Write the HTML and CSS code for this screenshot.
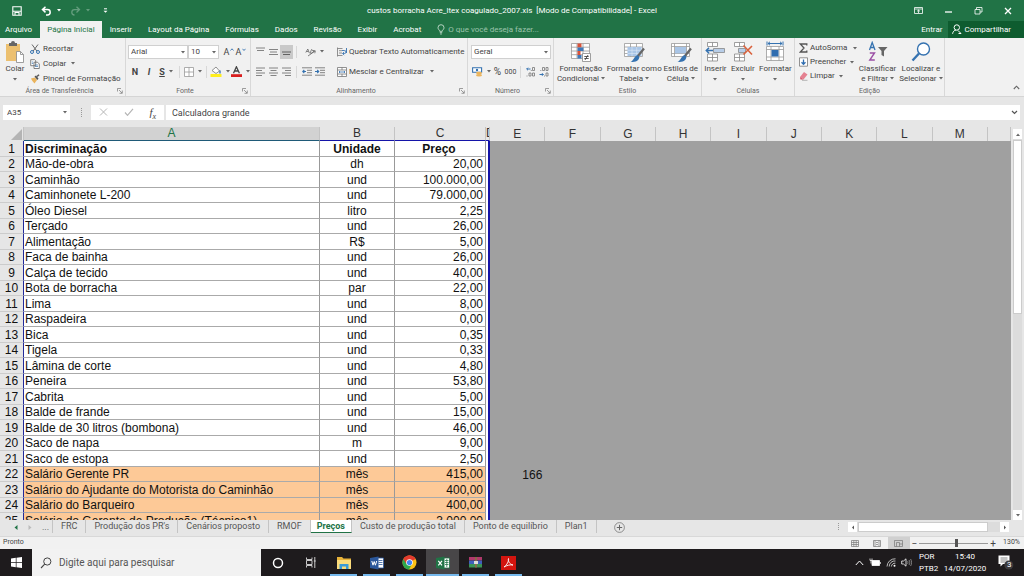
FILE: index.html
```html
<!DOCTYPE html>
<html lang="pt-BR">
<head>
<meta charset="utf-8">
<title>custos borracha Acre_ltex coagulado_2007.xls - Excel</title>
<link rel="stylesheet" href="styles.css">
</head>
<body>
<svg class="defs" aria-hidden="true">
  <symbol id="caret" viewBox="0 0 4 3"><path d="M0 0h4L2 2.4z" fill="currentColor"/></symbol>
  <symbol id="launch" viewBox="0 0 6 6"><path d="M.5 3.500V.5H4M2 2l3 3M5.300 2.500v2.800H2.500" fill="none" stroke="#777" stroke-width=".7"/></symbol>
</svg>

<header class="titlebar">
  <div class="quick">
    <button class="q-save" aria-label="Salvar"><svg width="10" height="10" viewBox="0 0 10 10"><path d="M.8.8h8.400v8.400H.8zM.8 5.200h8.400M3 9V6.500h4V9" fill="none" stroke="#fff" stroke-width="1.100"/></svg></button>
    <button class="q-undo" aria-label="Desfazer"><svg width="11" height="10" viewBox="0 0 11 10"><path d="M4.500.8L1.500 3.600l3 2.800M1.500 3.600h5a2.700 2.700 0 0 1 0 5.400H5" fill="none" stroke="#fff" stroke-width="1.500"/></svg><svg class="caret"><use href="#caret"/></svg></button>
    <button class="q-redo" aria-label="Refazer"><svg width="11" height="10" viewBox="0 0 11 10"><path d="M6.500.8l3 2.800-3 2.800M9.500 3.600h-5a2.700 2.700 0 0 0 0 5.400" fill="none" stroke="#fff" stroke-width="1.300"/></svg><svg class="caret"><use href="#caret"/></svg></button>
    <button class="q-more" aria-label="Personalizar"><svg width="5" height="6" viewBox="0 0 5 6"><path d="M1 .8h3" stroke="#fff"/><path d="M.5 2.700h4l-2 2z" fill="#fff"/></svg></button>
  </div>
  <h1>custos borracha Acre_ltex coagulado_2007.xls &nbsp;[Modo de Compatibilidade] - Excel</h1>
  <div class="window-buttons">
    <button aria-label="Opções da faixa"><svg width="9" height="7" viewBox="0 0 9 7"><path d="M.5.5h8v6h-8zM.5 2h8M4.500 6V3M3 4.400L4.500 3 6 4.400" fill="none" stroke="#fff" stroke-width=".8"/></svg></button>
    <button aria-label="Minimizar"><svg width="9" height="7" viewBox="0 0 9 7"><path d="M1 5h7" stroke="#fff" stroke-width="1.300"/></svg></button>
    <button aria-label="Restaurar"><svg width="9" height="8" viewBox="0 0 9 8"><path d="M1 2.500h5v4.500H1zM2.500 2.500v-2H8v4.500H6" fill="none" stroke="#fff" stroke-width=".8"/></svg></button>
    <button aria-label="Fechar"><svg width="8" height="8" viewBox="0 0 8 8"><path d="M1 1l6 6M7 1L1 7" stroke="#fff" stroke-width="1.300"/></svg></button>
  </div>
</header>

<nav class="tabs">
  <a href="#" class="file">Arquivo</a>
  <a href="#" class="active">Página Inicial</a>
  <a href="#">Inserir</a>
  <a href="#">Layout da Página</a>
  <a href="#">Fórmulas</a>
  <a href="#">Dados</a>
  <a href="#">Revisão</a>
  <a href="#">Exibir</a>
  <a href="#">Acrobat</a>
  <a href="#" class="tell"><svg width="8" height="11" viewBox="0 0 8 11"><path d="M2.700 7.300C2.700 6 1 5.500 1 3.700a3 3 0 0 1 6 0C7 5.500 5.300 6 5.300 7.300zM2.800 8.700h2.400M3.200 10h1.600" fill="none" stroke="#c4ddce" stroke-width=".9"/></svg>O que você deseja fazer...</a>
  <div class="account">
    <a href="#">Entrar</a>
    <button class="share"><svg width="10" height="11" viewBox="0 0 10 11"><circle cx="4.800" cy="3.500" r="2.700" fill="none" stroke="#fff"/><path d="M.6 9.800c.2-2 1.600-3.600 3.200-3.600M6 6.500l3 3M6.500 9.500H9" fill="none" stroke="#fff"/></svg>Compartilhar</button>
  </div>
</nav>

<section class="ribbon" aria-label="Página Inicial">
  <div class="group g-clip">
    <div class="body">
      <button class="big">
        <svg width="20" height="22" viewBox="0 0 20 22"><path d="M1 3h14v17H1z" fill="#ecc070"/><path d="M4 2h2a2 2 0 0 1 4 0h2v3H4z" fill="#666"/><path d="M11.500 10.500h4l3 3v8h-7z" fill="#fff" stroke="#888" stroke-width=".8"/><path d="M15.500 10.500v3h3" fill="none" stroke="#888" stroke-width=".8"/></svg>
        <span>Colar</span><svg class="caret"><use href="#caret"/></svg>
      </button>
      <div class="list">
        <button><svg width="10" height="10" viewBox="0 0 10 10"><path d="M2 .5l4.800 6.500M8 .5L3.200 7" stroke="#666" fill="none"/><circle cx="2" cy="8" r="1.500" fill="none" stroke="#3572b0"/><circle cx="8" cy="8" r="1.500" fill="none" stroke="#3572b0"/></svg>Recortar</button>
        <button><svg width="10" height="10" viewBox="0 0 10 10"><path d="M.7.7h4l1 1v5h-5zM4 3.200h3.500L9.300 5v4.500H4z" fill="#fff" stroke="#666" stroke-width=".8"/><path d="M5 6h3M5 7.500h3M1.800 3h1.500M1.800 4.500h1.500" stroke="#3572b0" stroke-width=".7"/></svg>Copiar<svg class="caret"><use href="#caret"/></svg></button>
        <button><svg width="10" height="10" viewBox="0 0 10 10"><path d="M1 4.500l4-1 2 2.500-2.500 3.500C3 8 2 6.500 1 4.500z" fill="#eab45d"/><path d="M4.500 2.500l1.500-1 2.500 3-1.200 1.500z" fill="#555"/><path d="M7 2.500L9 .7" stroke="#555" stroke-width="1.500"/></svg>Pincel de Formatação</button>
      </div>
    </div>
    <footer><span>Área de Transferência</span><svg class="launch"><use href="#launch"/></svg></footer>
  </div>

  <div class="group g-font">
    <div class="body rows">
      <div class="row">
        <span class="drop"><select class="font-name" aria-label="Fonte"><option>Arial</option></select><svg class="caret"><use href="#caret"/></svg></span>
        <span class="drop"><select class="font-size" aria-label="Tamanho"><option>10</option></select><svg class="caret"><use href="#caret"/></svg></span>
        <button class="grow" aria-label="Aumentar fonte">A<svg width="4" height="7" viewBox="0 0 4 7"><path d="M.5 2.500L2 .8l1.500 1.700" fill="none" stroke="#3572b0" stroke-width=".9"/></svg></button>
        <button class="grow" aria-label="Diminuir fonte">A<svg width="4" height="7" viewBox="0 0 4 7"><path d="M.5.8L2 2.500 3.500.8" fill="none" stroke="#3572b0" stroke-width=".9"/></svg></button>
      </div>
      <div class="row">
        <button class="t14"><b>N</b></button>
        <button class="t14"><b><i>I</i></b></button>
        <button class="t20"><b><u>S</u></b><svg class="caret"><use href="#caret"/></svg></button>
        <i class="sep"></i>
        <button class="t20"><svg width="10" height="10" viewBox="0 0 10 10"><path d="M.5.5h9v9h-9zM5 .5v9M.5 5h9" fill="#fff" stroke="#999" stroke-width=".8"/></svg><svg class="caret"><use href="#caret"/></svg></button>
        <i class="sep"></i>
        <button class="t20"><svg width="12" height="11" viewBox="0 0 12 11"><path d="M2 4.500l4-3.500 3.500 4L6 7.500z" fill="#fff" stroke="#777" stroke-width=".8"/><path d="M10 4.500v3" stroke="#3572b0" stroke-width="1.300"/><path d="M.5 8h11v3H.5z" fill="#ffee1f"/></svg><svg class="caret"><use href="#caret"/></svg></button>
        <button class="t20"><svg width="11" height="11" viewBox="0 0 11 11"><path d="M2.500 7.200L5.400.8l3 6.400M3.500 5h4" fill="none" stroke="#444" stroke-width="1.300"/><path d="M0 8.200h11V11H0z" fill="#d81e1e"/></svg><svg class="caret"><use href="#caret"/></svg></button>
      </div>
    </div>
    <footer><span>Fonte</span><svg class="launch"><use href="#launch"/></svg></footer>
  </div>

  <div class="group g-align">
    <div class="body rows">
      <div class="row">
        <button class="t14"><svg width="9" height="9" viewBox="0 0 9 9"><path d="M0 1h9M1 3.500h7" stroke="#777" stroke-width=".9"/></svg></button>
        <button class="t14"><svg width="9" height="9" viewBox="0 0 9 9"><path d="M0 2.500h9M1 5h7M0 7.500h9" stroke="#777" stroke-width=".9"/></svg></button>
        <button class="t14 on"><svg width="9" height="9" viewBox="0 0 9 9"><path d="M0 5h9M1 7.500h7" stroke="#555" stroke-width=".9"/></svg></button>
        <i class="sep"></i>
        <button class="orient"><svg width="11" height="10" viewBox="0 0 11 10"><path d="M.8 5.500l2-3.500 1.500 4M1.500 4.500h2M5 6.500l1.500-4 2.500 2-3.500 2.200M3 9l7-5M7.800 3.500l2.500.3-.5 2.500" fill="none" stroke="#666" stroke-width=".8"/></svg><svg class="caret"><use href="#caret"/></svg></button>
        <button class="wide"><svg width="10" height="10" viewBox="0 0 10 10"><path d="M.5.500V9.500M.5 1.500h5M2 3.700h3M2 6h3M.5 8.500h5" fill="none" stroke="#777" stroke-width=".8"/><path d="M5 3.500h2.500a1.300 1.300 0 0 1 0 3H6M7.200 5L5.500 6.500 7.200 8M9.500 1v5" fill="none" stroke="#3572b0" stroke-width=".9"/></svg>Quebrar Texto Automaticamente</button>
      </div>
      <div class="row">
        <button class="t14"><svg width="9" height="9" viewBox="0 0 9 9"><path d="M0 1h9M0 3.500h6M0 6h9M0 8.500h6" stroke="#777" stroke-width=".9"/></svg></button>
        <button class="t14"><svg width="9" height="9" viewBox="0 0 9 9"><path d="M0 1h9M1.500 3.500h6M0 6h9M1.500 8.500h6" stroke="#777" stroke-width=".9"/></svg></button>
        <button class="t14"><svg width="9" height="9" viewBox="0 0 9 9"><path d="M0 1h9M3 3.500h6M0 6h9M3 8.500h6" stroke="#777" stroke-width=".9"/></svg></button>
        <i class="sep"></i>
        <div class="indents">
          <button class="t14"><svg width="10" height="9" viewBox="0 0 10 9"><path d="M0 .8h10M5 3.300h5M5 5.700h5M0 8.200h10" stroke="#777" stroke-width=".9"/><path d="M4 4.500H.8M2.300 3L.8 4.500 2.300 6" stroke="#3572b0" stroke-width="1.100" fill="none"/></svg></button>
          <button class="t14"><svg width="10" height="9" viewBox="0 0 10 9"><path d="M0 .8h10M5 3.300h5M5 5.700h5M0 8.200h10" stroke="#777" stroke-width=".9"/><path d="M0 4.500h3.500M2.200 3l1.500 1.500L2.200 6" stroke="#3572b0" stroke-width="1.100" fill="none"/></svg></button>
        </div>
        <button class="wide"><svg width="10" height="10" viewBox="0 0 10 10"><path d="M.5.5h9v9h-9zM.5 3h9M.5 7h9M5 .5V3M5 7v2.500" fill="#fff" stroke="#777" stroke-width=".8"/><path d="M2 5h6M3 4L2 5l1 1M7 4l1 1-1 1" fill="none" stroke="#3572b0" stroke-width=".8"/></svg>Mesclar e Centralizar<svg class="caret far"><use href="#caret"/></svg></button>
      </div>
    </div>
    <footer><span>Alinhamento</span><svg class="launch"><use href="#launch"/></svg></footer>
  </div>

  <div class="group g-num">
    <div class="body rows">
      <div class="row">
        <span class="drop fill"><select aria-label="Formato de número"><option>Geral</option></select><svg class="caret"><use href="#caret"/></svg></span>
      </div>
      <div class="row">
        <button class="t20"><svg width="11" height="10" viewBox="0 0 11 10"><path d="M.6.8h9v4.400h-9z" fill="#fff" stroke="#3572b0" stroke-width="1.100"/><circle cx="5" cy="3" r="1.200" fill="#3572b0"/><ellipse cx="7" cy="6" rx="3" ry="1.200" fill="#eab45d"/><ellipse cx="7" cy="8.300" rx="3" ry="1.200" fill="#eab45d"/></svg><svg class="caret"><use href="#caret"/></svg></button>
        <button class="t14 pct">%</button>
        <button class="t14 mil">000</button>
        <i class="sep"></i>
        <button class="t14"><svg width="10" height="10" viewBox="0 0 10 10"><path d="M4.500 2H.7M2 .7L.7 2 2 3.300" fill="none" stroke="#3572b0"/><path d="M6.500.5h2v3h-2zM3 6h2v3H3zM6.500 6h2v3h-2zM1 8.500v1M5.300 3v1" fill="none" stroke="#777" stroke-width=".8"/></svg></button>
        <button class="t14"><svg width="10" height="10" viewBox="0 0 10 10"><path d="M.5 7.500h3.800M3 6.200l1.300 1.300L3 8.800" fill="none" stroke="#3572b0"/><path d="M3.500.5h2v3h-2zM7 .5h2v3H7zM7 6h2v3H7zM1.800 3v1M5.500 8.500v1" fill="none" stroke="#777" stroke-width=".8"/></svg></button>
      </div>
    </div>
    <footer><span>Número</span><svg class="launch"><use href="#launch"/></svg></footer>
  </div>

  <div class="group g-style">
    <div class="body">
      <button class="big"><svg width="22" height="22" viewBox="0 0 22 22"><path d="M1.500 2.500h18v15h-18zM1.500 6.200h18M1.500 10h18M1.500 13.700h18M7 2.500v15M13 2.500v15" fill="#fff" stroke="#999" stroke-width=".8"/><path d="M7.500 2.500h4v4h-4z" fill="#d9533a"/><path d="M7.500 6.500h6v3.500h-6z" fill="#3f78b8"/><path d="M7.500 10h3v4h-3z" fill="#d9533a"/><path d="M7.500 14h4v3.500h-4z" fill="#3f78b8"/><path d="M12.500 12.500h8v8h-8z" fill="#fff" stroke="#888" stroke-width=".8"/><path d="M14.300 15.500h4.400M14.300 17.500h4.400M18 14l-3 5" stroke="#333" stroke-width=".8"/></svg><span>Formatação<br>Condicional <svg class="caret"><use href="#caret"/></svg></span></button>
      <button class="big"><svg width="22" height="22" viewBox="0 0 22 22"><path d="M1.500 2.500h18v13h-18zM1.500 6h18M1.500 9.300h18M1.500 12.500h18M7.500 2.500v13M13.500 2.500v13" fill="#fff" stroke="#999" stroke-width=".8"/><path d="M4.500 6h14v9h-14z" fill="#a9c5e6"/><path d="M4.500 9.300h14M4.500 12.500h14M9 6v9M13.700 6v9" stroke="#dce8f5" stroke-width=".6"/><path d="M21 7.500l-6.500 8" stroke="#666" stroke-width="2.200"/><path d="M14.500 14l2 2c-1 4-3 5-9 5 3-1 3-5 7-7z" fill="#3572b0"/></svg><span>Formatar como<br>Tabela <svg class="caret"><use href="#caret"/></svg></span></button>
      <button class="big"><svg width="22" height="22" viewBox="0 0 22 22"><path d="M1.500 2.500h18v13h-18zM1.500 5.500h18M1.500 12.500h18M4.500 2.500v13M16.500 2.500v13" fill="#fff" stroke="#999" stroke-width=".8"/><path d="M5 6h11v6.300H5z" fill="#a9c5e6"/><path d="M21 7.500l-6.500 8" stroke="#666" stroke-width="2.200"/><path d="M14.500 14l2 2c-1 4-3 5-9 5 3-1 3-5 7-7z" fill="#3572b0"/></svg><span>Estilos de<br>Célula <svg class="caret"><use href="#caret"/></svg></span></button>
    </div>
    <footer><span>Estilo</span></footer>
  </div>

  <div class="group g-cells">
    <div class="body">
      <button class="big"><svg width="20" height="22" viewBox="0 0 20 22"><path d="M2.500 1.500h10v4h-10zM7.500 1.500v4M2.500 13h10v7h-10zM7.500 13v7M2.500 16.500h10" fill="#fff" stroke="#888" stroke-width=".8"/><path d="M8.500 7.500h11v4h-11z" fill="#b7cde8" stroke="#888" stroke-width=".8"/><path d="M8 9.500H1.500M4 6.800L1.300 9.500 4 12.200" fill="none" stroke="#3572b0" stroke-width="1.500"/></svg><span>Inserir</span><svg class="caret"><use href="#caret"/></svg></button>
      <button class="big"><svg width="20" height="22" viewBox="0 0 20 22"><path d="M1.500 1.500h10v4h-10zM6.500 1.500v4M1.500 13h10v7h-10zM6.500 13v7M1.500 16.500h10" fill="#fff" stroke="#888" stroke-width=".8"/><path d="M5.500 7.500h7v4h-7z" fill="#b7cde8" stroke="#888" stroke-width=".8"/><path d="M10.500 4.500l8.500 9M19 5l-8.500 8.500" stroke="#d9613c" stroke-width="1.600"/></svg><span>Excluir</span><svg class="caret"><use href="#caret"/></svg></button>
      <button class="big"><svg width="20" height="22" viewBox="0 0 20 22"><path d="M1.500 5.500h17v14h-17zM1.500 8.500h17M1.500 16h17M6 5.500v14M14 5.500v14" fill="#fff" stroke="#999" stroke-width=".8"/><path d="M6.500 9h7v6.500h-7z" fill="#2f6db0"/><path d="M3 2.500h14M5 .8L3 2.500l2 1.700M15 .8l2 1.700-2 1.700M2 .5v4M18 .5v4" fill="none" stroke="#3572b0"/></svg><span>Formatar</span><svg class="caret"><use href="#caret"/></svg></button>
    </div>
    <footer><span>Células</span></footer>
  </div>

  <div class="group g-edit">
    <div class="body">
      <div class="list">
        <button><svg width="9" height="10" viewBox="0 0 9 10"><path d="M7.800 2.500V1H1.300L5 5 1.300 9h6.500V7.500" fill="none" stroke="#555" stroke-width="1.300"/></svg>AutoSoma<svg class="caret far"><use href="#caret"/></svg></button>
        <button><svg width="9" height="10" viewBox="0 0 9 10"><path d="M.5.8h8v8.400h-8z" fill="#fff" stroke="#777" stroke-width=".8"/><path d="M4.500 2.500v5M2.500 5.300l2 2 2-2" fill="none" stroke="#2f6db0" stroke-width="1.300"/></svg>Preencher<svg class="caret"><use href="#caret"/></svg></button>
        <button><svg width="9" height="10" viewBox="0 0 9 10"><path d="M1 6l4-5 3.500 2.500-4 5z" fill="#e58191"/><path d="M1 6l3.500 2.500H1.500z" fill="#d04a60"/><path d="M3 9.300h5.500" stroke="#999" stroke-width=".7"/></svg>Limpar<svg class="caret"><use href="#caret"/></svg></button>
      </div>
      <button class="big"><svg width="20" height="22" viewBox="0 0 20 22"><path d="M1.500 9l2.700-7.500L7 9M2.500 6.500h3.500" fill="none" stroke="#3572b0" stroke-width="1.300"/><path d="M1.800 12h4.700l-4.700 7h5" fill="none" stroke="#9b4fa5" stroke-width="1.400"/><path d="M10 6h9.500l-3.500 4v5.500l-2.500-1.500V10z" fill="#666"/></svg><span>Classificar<br>e Filtrar <svg class="caret"><use href="#caret"/></svg></span></button>
      <button class="big"><svg width="20" height="22" viewBox="0 0 20 22"><circle cx="12.500" cy="8" r="6" fill="#fff" stroke="#3572b0" stroke-width="1.400"/><path d="M8 12.500l-6.500 7" stroke="#3572b0" stroke-width="2.400"/></svg><span>Localizar e<br>Selecionar <svg class="caret"><use href="#caret"/></svg></span></button>
    </div>
    <footer><span>Edição</span></footer>
  </div>
  <button class="collapse" aria-label="Recolher"><svg width="7" height="5" viewBox="0 0 7 5"><path d="M.8 4L3.500 1.200 6.200 4" fill="none" stroke="#666" stroke-width="1.100"/></svg></button>
</section>

<section class="formula">
  <span class="drop"><input class="name-box" aria-label="Caixa de nome" value="A35"><svg class="caret"><use href="#caret"/></svg></span>
  <i class="grip"></i>
  <div class="fx">
    <button aria-label="Cancelar"><svg width="9" height="8" viewBox="0 0 9 8"><path d="M1 .5l7 7M8 .5l-7 7" stroke="#b5b5b5"/></svg></button>
    <button aria-label="Inserir"><svg width="10" height="8" viewBox="0 0 10 8"><path d="M1 4.500l2.500 2.800L9 .8" fill="none" stroke="#b5b5b5" stroke-width="1.200"/></svg></button>
    <button class="fn" aria-label="Inserir função"><i>f<sub>x</sub></i></button>
  </div>
  <div class="entry">
    <input aria-label="Barra de fórmulas" value="Calculadora grande">
    <svg width="7" height="5" viewBox="0 0 7 5"><path d="M1 1l2.500 2.500L6 1" fill="none" stroke="#555" stroke-width="1.200"/></svg>
  </div>
</section>

<main class="sheet">
  <div class="grid">
    <table>
      <colgroup><col class="c-n"><col class="c-a"><col class="c-b"><col class="c-c"><col class="c-d"><col><col><col><col><col><col><col><col><col><col class="c-end"></colgroup>
      <thead><tr><th class="corner"><svg width="11" height="11" viewBox="0 0 11 11"><path d="M11 0v11H0z" fill="#b4b4b4"/></svg></th><th class="sel">A</th><th class="ink">B</th><th class="ink">C</th><th class="ink"><span class="narrow">D</span></th><th>E</th><th>F</th><th>G</th><th>H</th><th>I</th><th>J</th><th>K</th><th>L</th><th>M</th><th></th></tr></thead>
      <tbody>
        <tr class="head"><th>1</th><td>Discriminação</td><td>Unidade</td><td>Preço</td><td></td><td colspan="10"></td></tr>
        <tr><th>2</th><td>Mão-de-obra</td><td>dh</td><td>20,00</td><td></td><td colspan="10"></td></tr>
        <tr><th>3</th><td>Caminhão</td><td>und</td><td>100.000,00</td><td></td><td colspan="10"></td></tr>
        <tr><th>4</th><td>Caminhonete L-200</td><td>und</td><td>79.000,00</td><td></td><td colspan="10"></td></tr>
        <tr><th>5</th><td>Óleo Diesel</td><td>litro</td><td>2,25</td><td></td><td colspan="10"></td></tr>
        <tr><th>6</th><td>Terçado</td><td>und</td><td>26,00</td><td></td><td colspan="10"></td></tr>
        <tr><th>7</th><td>Alimentação</td><td>R$</td><td>5,00</td><td></td><td colspan="10"></td></tr>
        <tr><th>8</th><td>Faca de bainha</td><td>und</td><td>26,00</td><td></td><td colspan="10"></td></tr>
        <tr><th>9</th><td>Calça de tecido</td><td>und</td><td>40,00</td><td></td><td colspan="10"></td></tr>
        <tr><th>10</th><td>Bota de borracha</td><td>par</td><td>22,00</td><td></td><td colspan="10"></td></tr>
        <tr><th>11</th><td>Lima</td><td>und</td><td>8,00</td><td></td><td colspan="10"></td></tr>
        <tr><th>12</th><td>Raspadeira</td><td>und</td><td>0,00</td><td></td><td colspan="10"></td></tr>
        <tr><th>13</th><td>Bica</td><td>und</td><td>0,35</td><td></td><td colspan="10"></td></tr>
        <tr><th>14</th><td>Tigela</td><td>und</td><td>0,33</td><td></td><td colspan="10"></td></tr>
        <tr><th>15</th><td>Lâmina de corte</td><td>und</td><td>4,80</td><td></td><td colspan="10"></td></tr>
        <tr><th>16</th><td>Peneira</td><td>und</td><td>53,80</td><td></td><td colspan="10"></td></tr>
        <tr><th>17</th><td>Cabrita</td><td>und</td><td>5,00</td><td></td><td colspan="10"></td></tr>
        <tr><th>18</th><td>Balde de frande</td><td>und</td><td>15,00</td><td></td><td colspan="10"></td></tr>
        <tr><th>19</th><td>Balde de 30 litros (bombona)</td><td>und</td><td>46,00</td><td></td><td colspan="10"></td></tr>
        <tr><th>20</th><td>Saco de napa</td><td>m</td><td>9,00</td><td></td><td colspan="10"></td></tr>
        <tr><th>21</th><td>Saco de estopa</td><td>und</td><td>2,50</td><td></td><td colspan="10"></td></tr>
        <tr class="pay"><th>22</th><td>Salário Gerente PR</td><td>mês</td><td>415,00</td><td></td><td>166</td><td colspan="9"></td></tr>
        <tr class="pay"><th>23</th><td>Salário do Ajudante do Motorista do Caminhão</td><td>mês</td><td>400,00</td><td></td><td colspan="10"></td></tr>
        <tr class="pay"><th>24</th><td>Salário do Barqueiro</td><td>mês</td><td>400,00</td><td></td><td colspan="10"></td></tr>
        <tr class="pay"><th>25</th><td>Salário do Gerente de Produção (Técnico1)</td><td>mês</td><td>3.000,00</td><td></td><td colspan="10"></td></tr>
      </tbody>
    </table>
  </div>
  <div class="vscroll">
    <button aria-label="Para cima"><svg class="caret up"><use href="#caret"/></svg></button>
    <div class="track"><div class="thumb"></div></div>
    <button aria-label="Para baixo"><svg class="caret"><use href="#caret"/></svg></button>
  </div>
</main>

<nav class="sheets">
  <div class="arrows">
    <button aria-label="Anterior"><svg width="4" height="5" viewBox="0 0 4 5"><path d="M3.500 0v5L.5 2.500z" fill="#217346"/></svg></button>
    <button aria-label="Próxima"><svg width="4" height="5" viewBox="0 0 4 5"><path d="M.5 0v5l3-2.500z" fill="#bbb"/></svg></button>
    <button aria-label="Mais planilhas">...</button>
  </div>
  <a href="#">FRC</a><a href="#">Produção dos PR's</a><a href="#">Cenários proposto</a><a href="#">RMOF</a><a href="#" class="active">Preços</a><a href="#">Custo de produção total</a><a href="#">Ponto de equilíbrio</a><a href="#">Plan1</a>
  <button class="add" aria-label="Nova planilha"><svg width="11" height="11" viewBox="0 0 11 11"><circle cx="5.500" cy="5.500" r="4.900" fill="none" stroke="#777" stroke-width=".8"/><path d="M5.500 2.800v5.400M2.800 5.500h5.400" stroke="#666"/></svg></button>
  <i class="grip"></i>
  <div class="hscroll">
    <button aria-label="Para esquerda"><svg width="4" height="5" viewBox="0 0 4 5"><path d="M3 .5v4l-2-2z" fill="#555"/></svg></button>
    <div class="track"><div class="thumb"></div></div>
    <button aria-label="Para direita"><svg width="4" height="5" viewBox="0 0 4 5"><path d="M1 .5v4l2-2z" fill="#555"/></svg></button>
  </div>
</nav>

<footer class="status">
  <span class="ready">Pronto</span>
  <button aria-label="Normal"><svg width="8" height="7" viewBox="0 0 8 7"><path d="M.5.5h7v6h-7zM.5 2.500h7M.5 4.500h7M2.800.5v6M5.200.5v6" fill="none" stroke="#777" stroke-width=".7"/></svg></button>
  <button aria-label="Layout da página"><svg width="8" height="7" viewBox="0 0 8 7"><path d="M.5.5h7v6h-7zM2 .5v6M6 .5v6M3 2.500h2M3 4.500h2" fill="none" stroke="#777" stroke-width=".7"/></svg></button>
  <button class="on" aria-label="Quebra de página"><svg width="9" height="7" viewBox="0 0 9 7"><path d="M.5.5h8v6h-8zM2.500 6.500v-4h3v4M5.500 4h3" fill="none" stroke="#777" stroke-width=".7"/></svg></button>
  <div class="zoom"><span>−</span><input type="range" min="10" max="210" value="118" aria-label="Zoom"><span>+</span></div>
  <span class="level">130%</span>
</footer>

<footer class="taskbar">
  <button class="start" aria-label="Iniciar"><svg width="11" height="11" viewBox="0 0 11 11"><path d="M0 1.500l4.800-.7v4.400H0zM5.500.7L11 0v5.200H5.500zM0 5.900h4.800v4.400L0 9.600zM5.500 5.900H11V11l-5.500-.7z" fill="#fff"/></svg></button>
  <label class="search"><svg width="12" height="12" viewBox="0 0 12 12"><circle cx="7.300" cy="4.500" r="3.600" fill="none" stroke="#444"/><path d="M4.700 7.200L1 11" stroke="#444" stroke-width="1.100"/></svg><input aria-label="Pesquisar" placeholder="Digite aqui para pesquisar"></label>
  <div class="apps">
    <button aria-label="Cortana"><svg width="12" height="12" viewBox="0 0 12 12"><circle cx="6" cy="6" r="4.500" fill="none" stroke="#fff" stroke-width="1.500"/></svg></button>
    <button aria-label="Visão de tarefas"><svg width="12" height="11" viewBox="0 0 12 11"><path d="M1.500.5v2h5.500v-2M1.500 10.500v-2h5.500v2M1.500 3.500h5.500v4H1.500zM9.800 0v11M8.800 4h2" fill="none" stroke="#ddd" stroke-width=".9"/></svg></button>
    <button class="open" aria-label="Explorador"><svg width="16" height="14" viewBox="0 0 16 14"><path d="M1 1h5l1.500 1.500H15V13H1z" fill="#e8b33a"/><path d="M1 4h14v9H1z" fill="#fbdc7b"/><path d="M3.500 13V8h9v5h-2.500v-2.500H6V13z" fill="#3b9bd6"/></svg></button>
    <button class="open" aria-label="Word"><svg width="14" height="14" viewBox="0 0 14 14"><path d="M7 2h6.500v10H7z" fill="#fff" stroke="#2b579a" stroke-width=".8"/><path d="M8.500 4.500h4M8.500 6.500h4M8.500 8.500h4" stroke="#2b579a" stroke-width=".8"/><path d="M0 2l8.500-1.500v13L0 12z" fill="#2b579a"/><path d="M1.800 5l1.200 4.200L4.200 5.500l1.200 3.700L6.700 5" fill="none" stroke="#fff"/></svg></button>
    <button class="open" aria-label="Chrome"><svg width="15" height="15" viewBox="0 0 15 15"><circle cx="7.500" cy="7.500" r="7" fill="#fbc116"/><path d="M7.500 7.500L1.400 4A7 7 0 0 1 13.600 4z" fill="#e33b2e"/><path d="M7.500 7.500L1.400 4A7 7 0 0 0 7 14.500l3-5.500z" fill="#2da94f"/><path d="M7.500 4h6.100A7 7 0 0 0 1.400 4l3 5z" fill="#e33b2e"/><circle cx="7.500" cy="7.500" r="3.300" fill="#fff"/><circle cx="7.500" cy="7.500" r="2.600" fill="#4285f4"/></svg></button>
    <button class="open current" aria-label="Excel"><svg width="14" height="14" viewBox="0 0 14 14"><path d="M7 2h6.500v10H7z" fill="#fff" stroke="#217346" stroke-width=".8"/><path d="M9 4.500h3.500M9 6.500h3.500M9 8.500h3.500M10.800 3v8" stroke="#217346" stroke-width=".8"/><path d="M0 2l8.500-1.500v13L0 12z" fill="#217346"/><path d="M2.300 4.800l3.700 4.600M6 4.800L2.300 9.400" stroke="#fff" stroke-width="1.200"/></svg></button>
    <button class="open" aria-label="WinRAR"><svg width="15" height="13" viewBox="0 0 15 13"><path d="M1 1h13v3.500H1z" fill="#b0396b"/><path d="M1 4.500h13V8H1z" fill="#3f5fbb"/><path d="M1 8h13v3.500H1z" fill="#3b9356"/><path d="M7 1h2v10.500H7z" fill="#8a6a4a"/><path d="M6 5h4v3H6z" fill="#ddd"/></svg></button>
    <button class="open" aria-label="Acrobat"><svg width="15" height="14" viewBox="0 0 15 14"><path d="M0 0h15v14H0z" fill="#d3150f"/><path d="M3 11c3-2 5-6 4.500-8.500-.8 2 1 6 4.500 6.500-3-.5-6 .3-9 2z" fill="none" stroke="#fff" stroke-width=".9"/></svg></button>
  </div>
  <div class="tray">
    <svg width="9" height="6" viewBox="0 0 9 6"><path d="M.8 5l3.700-4 3.700 4" fill="none" stroke="#fff"/></svg>
    <svg width="12" height="9" viewBox="0 0 12 9"><path d="M3 2.500h7.500v5H3zM11.300 4v2" fill="#fff" stroke="#fff" stroke-width=".8"/><path d="M1 .5v2h2v-2M2 2.500v3" fill="none" stroke="#fff" stroke-width=".8"/></svg>
    <svg width="10" height="9" viewBox="0 0 10 9"><path d="M1 8.500A8 8 0 0 1 9.500.8M3.200 8.500A5.500 5.500 0 0 1 9.500 3M5.400 8.500a3.500 3.500 0 0 1 4-3.300" fill="none" stroke="#ccc" stroke-width=".9"/><circle cx="8.500" cy="7.700" r="1" fill="#fff"/></svg>
    <svg width="11" height="9" viewBox="0 0 11 9"><path d="M.7 3h1.800L5 .8v7.400L2.500 6H.7z" fill="none" stroke="#fff" stroke-width=".8"/><path d="M6.500 3c.6 1 .6 2 0 3M8 2c1 1.700 1 3.300 0 5M9.600 1c1.300 2.300 1.300 4.700 0 7" fill="none" stroke="#aaa" stroke-width=".7"/></svg>
    <span class="lang">POR<br>PTB2</span>
    <span class="clock">15:40<br>14/07/2020</span>
    <button class="note" aria-label="Notificações"><svg width="16" height="15" viewBox="0 0 16 15"><path d="M.5.5h11v8.500H5l-2.500 2.500V9h-2z" fill="#fff"/><path d="M2.500 3h7M2.500 5h7M2.500 7h5" stroke="#555" stroke-width=".7"/><circle cx="10.800" cy="10" r="4.500" fill="#3c3a3c"/></svg><span>3</span></button>
  </div>
</footer>
</body>
</html>
```

FILE: styles.css
```css
* { box-sizing: border-box; }
html, body { height: 100%; }
body {
  margin: 0;
  display: flex;
  flex-direction: column;
  overflow: hidden;
  background: #e6e6e6;
  color: #444;
  font: 8px/10px Roboto, "Noto Sans", sans-serif;
}
button, input, select {
  margin: 0;
  padding: 0;
  border: 0;
  border-radius: 0;
  background: none;
  color: inherit;
  font: inherit;
  outline: 0;
}
button { white-space: nowrap; }
a { color: inherit; text-decoration: none; white-space: nowrap; }
svg { flex: none; }
.defs { position: absolute; width: 0; height: 0; }
.caret { width: 4px; height: 3px; color: #666; }
.caret.up { transform: rotate(180deg); }
.launch { width: 6px; height: 6px; }

/* Title bar */
.titlebar {
  display: grid;
  grid-template-columns: 1fr auto 1fr;
  align-items: center;
  height: 21px;
  background: #217346;
  color: #fff;
}
.titlebar h1 { margin: 0; font-size: 8px; font-weight: 400; padding-top: 1px; white-space: nowrap; }
.quick { display: flex; align-items: center; padding-left: 12px; }
.quick button { display: flex; align-items: center; gap: 5px; }
.quick .caret { color: #fff; }
.q-save { width: 29px; }
.q-undo { width: 29px; }
.q-redo { width: 33px; opacity: .3; }
.window-buttons { display: flex; justify-content: flex-end; padding-right: 1px; }
.window-buttons button { width: 30px; display: flex; justify-content: center; align-items: center; }

/* Ribbon tabs */
.tabs {
  display: flex;
  align-items: stretch;
  height: 17px;
  background: #217346;
  color: #fff;
  line-height: 17px;
}
.tabs > a { padding: 0 8px; }
.tabs .file { padding: 0 8px 0 5px; }
.tabs .active { padding: 0 7px; background: #f1f1f1; color: #217346; }
.tabs .tell { display: flex; align-items: center; gap: 3px; color: #9cc4ac; }
.account { display: flex; margin-left: auto; }
.share { display: flex; align-items: center; gap: 2px; margin-left: 6px; padding: 0 13px 0 4px; background: #0e5c2f; }

/* Ribbon */
.ribbon {
  display: flex;
  height: 59px;
  background: #f1f1f1;
  border-bottom: 1px solid #d5d5d5;
  flex: none;
}
.group { display: flex; flex-direction: column; border-right: 1px solid #d8d8d8; padding-top: 3px; }
.g-clip { width: 126px; }
.g-font { width: 125px; }
.g-align { width: 217px; }
.g-num { width: 86px; }
.g-style { width: 148px; }
.g-cells { width: 93px; }
.g-edit { width: 150px; }
.body { display: flex; flex: 1; min-height: 0; }
.group footer { display: flex; flex: none; height: 10px; align-items: center; color: #666; font-size: 7px; padding: 0 2px; }
.group footer span { flex: 1; text-align: center; }
.big { display: flex; flex-direction: column; align-items: center; align-self: flex-start; flex: 1 1 auto; }
.big > span { display: block; padding-top: 1px; }
.big > .caret { margin-top: 4px; }
.big span .caret { vertical-align: middle; }
.g-clip .big { flex: 0 0 30px; }
.g-style .body { padding: 0 2px; }
.list { display: flex; flex-direction: column; }
.list button { display: flex; align-items: center; gap: 3px; height: 15px; }
.list .caret { margin-left: 2px; }
.g-edit .list { padding-left: 4px; flex: 0 0 60px; }
.g-edit .list button { gap: 2px; height: 14px; }
.rows { flex-direction: column; padding-top: 3px; gap: 5px; }
.row { display: flex; align-items: center; height: 15px; }
.row button { display: flex; align-items: center; justify-content: center; height: 14px; gap: 4px; }
.g-font .body { padding-left: 2px; }
.g-align .body { padding-left: 3px; }
.g-num .body { padding-left: 3px; }
.t14 { width: 13px; }
.t20 { width: 20px; }
.g-font .t14 { width: 14px; }
.g-font b { font-size: 9px; }
.row .t14.on { background: #c9c9c9; }
.row .wide { gap: 2px; }
.caret.far { margin-left: 4px; }
.orient, .indents { display: flex; width: 37px; padding-right: 8px; }
.row .grow { width: 12px; gap: 1px; font-size: 9px; }
.row .pct { font-size: 10px; }
.mil { font-size: 7px; }
.sep { width: 1px; height: 12px; margin: 0 3px; background: #d8d8d8; }
.drop { position: relative; display: flex; }
.drop select { appearance: none; height: 14px; padding-left: 2px; border: 1px solid #d0d0d0; background: #fff; }
.drop .caret { position: absolute; right: 3px; top: 6px; }
.font-name { width: 60px; }
.font-size { width: 31px; }
.fill { flex: 1; padding-right: 2px; }
.fill select { width: 100%; }
.fill .caret { right: 5px; }
.g-font .row .drop + .grow { margin-left: 4px; }
.collapse { margin: auto 4px 3px auto; }

/* Formula bar */
.formula { display: flex; flex: none; height: 30px; padding: 8px 4px 7px 3px; font-size: 9px; }
.name-box { width: 67px; height: 15px; padding-left: 4px; background: #fff; font-size: 8px; }
.grip { width: 2px; margin: 3px 0; border-left: 1px dotted #999; }
.formula .grip { margin-left: 11px; }
.fx { display: flex; align-items: center; justify-content: space-around; width: 73px; margin-left: 8px; background: #fff; }
.fn { font: 11px/12px "Liberation Serif", serif; }
.fn sub { font-size: 8px; line-height: 4px; }
.entry { display: flex; align-items: center; flex: 1; margin-left: 2px; padding: 0 2px 0 6px; background: #fff; }
.entry input { flex: 1; }

/* Worksheet */
.sheet { display: flex; flex: 1; min-height: 0; }
.grid { flex: 1; overflow: hidden; background: #a0a0a0; }
table { width: 100%; table-layout: fixed; border-collapse: separate; border-spacing: 0; color: #111; font: 12px/14px "Liberation Sans", Arial, sans-serif; }
th, td { padding: 0; overflow: hidden; white-space: nowrap; }
th { font-weight: 400; }
.c-n { width: 24px; }
.c-a { width: 296px; }
.c-b { width: 75px; }
.c-c { width: 91px; }
.c-d { width: 4px; }
.c-end { width: 23px; }
thead th { height: 14px; background: #e6e6e6; border-right: 1px solid #c4c4c4; color: #333; line-height: 13px; }
.corner svg { display: block; margin: 1px 1px 0 auto; }
thead .sel { background: #d2d2d2; color: #217346; border-bottom: 1px solid #1f5a78; }
thead .ink { border-bottom: 1px solid #1414a8; }
.narrow { display: block; width: 4px; overflow: hidden; }
tbody tr { height: 15px; }
tbody tr:nth-child(odd) { height: 16px; }
tbody th { background: #e6e6e6; border-bottom: 1px solid #ccc; border-right: 1px solid #222a9a; }
tbody td:nth-child(-n+4) { background: #fff; border-right: 1px solid #999; border-bottom: 1px solid #aaa; }
tbody td:nth-child(2) { padding-left: 1px; }
tbody td:nth-child(3) { text-align: center; }
tbody td:nth-child(4) { text-align: right; padding-right: 2px; }
tbody td:nth-child(5) { background: #fff; border-right: 2px solid #1414a8; }
tbody td:nth-child(6) { text-align: right; padding-right: 3px; }
tbody .head td { font-weight: 700; text-align: center; }
tbody .head td:nth-child(2) { text-align: left; }
tbody .pay td:nth-child(-n+4) { background: #fdc997; }
.vscroll { display: flex; flex-direction: column; width: 13px; padding: 2px 2px 0; }
.vscroll button { display: flex; align-items: center; justify-content: center; height: 10px; background: #fff; }
.vscroll .track { flex: 1; padding-top: 1px; background: #dcdcdc; }
.vscroll .thumb { height: 47%; background: #fff; border: 1px solid #ccc; }

/* Sheet tabs */
.sheets { display: flex; flex: none; height: 16px; padding: 0 15px 3px 0; color: #555; font-size: 9px; line-height: 12px; }
.sheets > a { padding: 0 8px; border-right: 1px solid #c4c4c4; }
.sheets > .active { padding: 0 6px; background: #fff; color: #217346; font-weight: 700; border-bottom: 1px solid #217346; }
.arrows { display: flex; gap: 10px; width: 53px; padding-left: 14px; border-right: 1px solid #c4c4c4; }
.add { display: flex; padding-top: 2px; margin-left: 17px; }
.sheets .grip { margin-left: auto; }
.hscroll { display: flex; width: 161px; height: 10px; margin: 2px 0 0 8px; }
.hscroll button { display: flex; align-items: center; justify-content: center; width: 9px; background: #fff; }
.hscroll .track { flex: 1; padding: 0 1px; background: #dcdcdc; }
.hscroll .thumb { width: 92%; height: 10px; background: #fff; border: 1px solid #ccc; }

/* Status bar */
.status { display: flex; align-items: stretch; flex: none; height: 13px; padding: 0 4px 0 3px; background: #f1f1f1; border-top: 1px solid #d8d8d8; font-size: 7px; line-height: 11px; }
.ready { margin-right: auto; }
.status button { display: flex; align-items: center; justify-content: center; width: 22px; }
.status .on { background: #d0d0d0; }
.zoom { display: flex; align-items: center; gap: 2px; margin-left: 2px; font-size: 10px; }
.zoom input { appearance: none; width: 69px; height: 9px; background: linear-gradient(#999, #999) center / 100% 1px no-repeat; }
.zoom input::-webkit-slider-thumb { appearance: none; width: 3px; height: 8px; background: #555; }
.level { width: 24px; text-align: right; }

/* Taskbar */
.taskbar { display: flex; flex: none; height: 27px; background: #1e1b1d; color: #fff; }
.start { width: 32px; display: flex; align-items: center; justify-content: center; }
.search { display: flex; align-items: center; gap: 7px; width: 229px; padding-left: 8px; background: #f2f2f2; color: #444; font-size: 10px; }
.search input { flex: 1; min-width: 0; }
.search input::placeholder { color: #555; }
.apps { display: flex; }
.apps button { display: flex; align-items: center; justify-content: center; width: 33px; }
.apps .open { background: linear-gradient(#76b9ed, #76b9ed) bottom / 27px 2px no-repeat; }
.apps .current { background-color: #484648; background-size: 100% 2px; }
.tray { display: flex; align-items: center; gap: 5px; margin-left: auto; padding-right: 10px; line-height: 12px; }
.lang { width: 21px; padding-left: 2px; text-align: left; }
.clock { width: 44px; text-align: center; }
.note { position: relative; margin-left: 6px; display: flex; }
.note span { position: absolute; left: 9px; top: 4px; }
```
